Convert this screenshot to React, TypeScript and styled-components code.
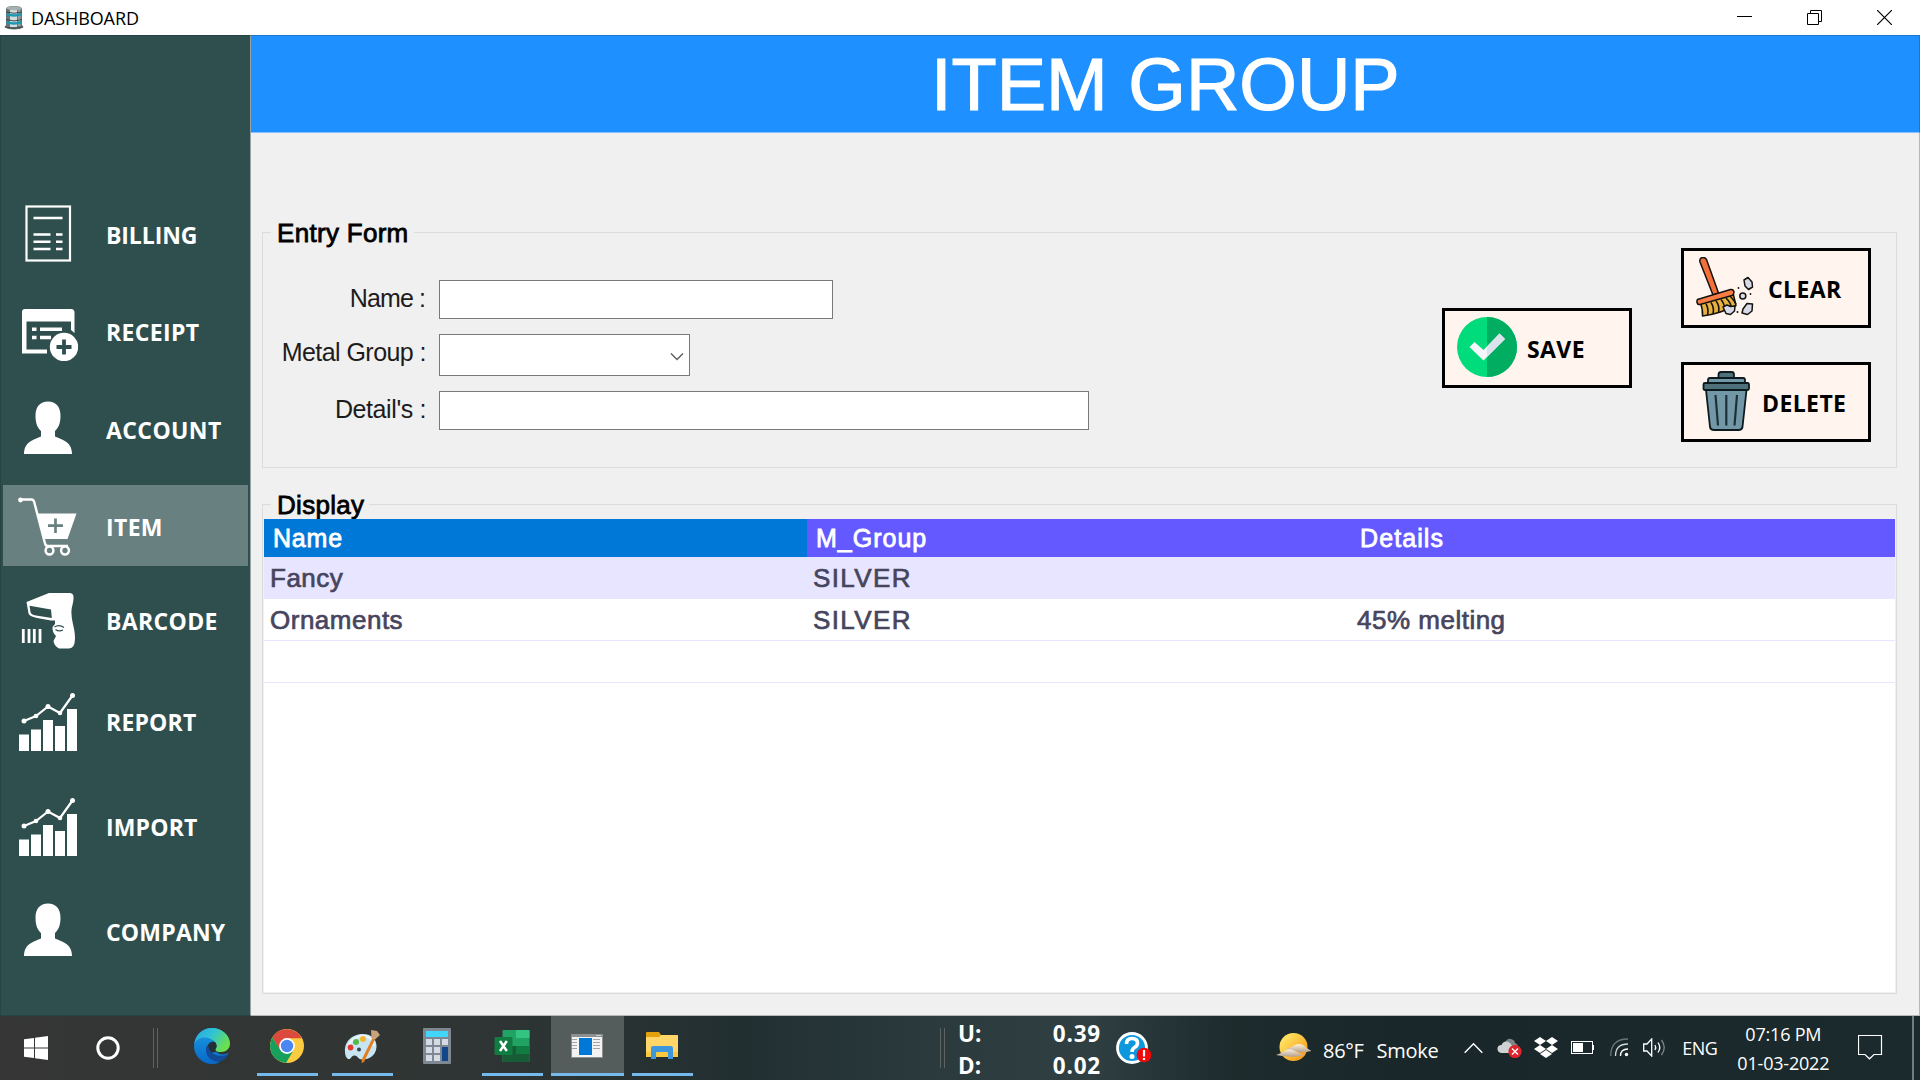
import React from "react";
import styled, { createGlobalStyle } from "styled-components";

const Global = createGlobalStyle`
  html, body { margin: 0; padding: 0; background: #fff; }
  *, *::before, *::after { box-sizing: border-box; }
  svg { display: block; flex: none; }
`;

const segoe = `"Open Sans", "Noto Sans", sans-serif`;
const msSans = `"Liberation Sans", Arial, sans-serif`;

const Screen = styled.div`
  width: 1920px;
  height: 1080px;
  display: grid;
  grid-template-rows: 35px 981px 64px;
  overflow: hidden;
  font-family: ${segoe};
`;

/* ---------- window chrome ---------- */

const TitleBar = styled.header`
  display: flex;
  align-items: center;
  background: #fff;
  padding-left: 4px;
`;
const WindowTitle = styled.span`
  flex: 1;
  margin-left: 7px;
  padding-top: 0;
  font-size: 18px;
  letter-spacing: -0.1px;
  color: #000;
`;
const Caption = styled.div`
  width: 70px;
  height: 34px;
  display: flex;
  align-items: center;
  justify-content: center;
`;
const Captions = styled.div`
  display: flex;
  padding-right: 1px;
`;

const Workspace = styled.div`
  display: grid;
  grid-template-columns: 251px 1fr;
  min-height: 0;
`;

/* ---------- sidebar ---------- */

const Sidebar = styled.nav`
  background: #2f4f4f;
  border-right: 1px solid #95a3a3;
  border-left: 1px solid #284343;
  border-top: 1px solid #284343;
  border-bottom: 1px solid #284343;
  display: flex;
  flex-direction: column;
  padding: 0 2px;
`;
const NavButton = styled.a<{ $gap: number; $active?: boolean }>`
  display: flex;
  align-items: center;
  flex: none;
  height: 81px;
  margin-top: ${(p) => p.$gap}px;
  padding-left: 15px;
  background: ${(p) => (p.$active ? "#698080" : "transparent")};
  color: #fff;
`;
const NavLabel = styled.span<{ $tracking: number }>`
  margin-left: 28px;
  padding-top: 3px;
  font-size: 23px;
  font-weight: 700;
  line-height: 30px;
  letter-spacing: ${(p) => p.$tracking}px;
  white-space: nowrap;
`;

/* ---------- main panel ---------- */

const Main = styled.main`
  background: #f0f0f0;
  border-right: 1px solid #b4b8b8;
  border-bottom: 1px solid #b4b8b8;
  display: flex;
  flex-direction: column;
  min-width: 0;
`;
const Banner = styled.div`
  height: 98px;
  flex: none;
  display: flex;
  align-items: center;
  margin-right: -1px;
  padding: 2px 0 0 680px;
  background: #1e90ff;
  border-top: 1px solid #1b78cf;
  border-right: 1px solid #1b78cf;
  border-bottom: 1px solid #84c0fb;
`;
const BannerTitle = styled.h1`
  margin: 0;
  font: 400 74px/80px ${msSans};
  color: #fff;
  white-space: nowrap;
  -webkit-text-stroke: 1.2px #fff;
`;
const Group = styled.fieldset<{ $top: number; $height: number }>`
  flex: none;
  margin: ${(p) => p.$top}px 22px 0 11px;
  padding: 0;
  min-width: 0;
  height: ${(p) => p.$height}px;
  border: 1px solid #dcdcdc;
`;
const GroupLegend = styled.legend`
  margin-left: 8px;
  padding: 1px 5px 0 6px;
  font: 400 26px/26px ${msSans};
  letter-spacing: 0.3px;
  color: #000;
  -webkit-text-stroke: 0.8px #000;
`;
const EntryBody = styled.div`
  display: flex;
  justify-content: space-between;
  padding-right: 25px;
`;
const Form = styled.div`
  padding-top: 34px;
`;
const FormRow = styled.div<{ $gap?: number }>`
  display: flex;
  align-items: center;
  margin-top: ${(p) => p.$gap ?? 0}px;
`;
const FormLabel = styled.label<{ $inset?: number; $lift?: number; $tracking?: number }>`
  width: 176px;
  padding-right: ${(p) => 13 + (p.$inset ?? 0)}px;
  padding-bottom: ${(p) => p.$lift ?? 4}px;
  text-align: right;
  font: 400 25px/30px ${msSans};
  letter-spacing: ${(p) => p.$tracking ?? -0.4}px;
  color: #1c1c1c;
  white-space: nowrap;
`;
const Field = styled.div<{ $w: number; $h: number }>`
  width: ${(p) => p.$w}px;
  height: ${(p) => p.$h}px;
  background: #fff;
  border: 1px solid #7a7a7a;
  display: flex;
  align-items: center;
  justify-content: flex-end;
  padding: 2px 5px 0 0;
`;
const Actions = styled.div`
  display: flex;
  gap: 49px;
`;
const ActionColumn = styled.div<{ $top: number }>`
  display: flex;
  flex-direction: column;
  gap: 34px;
  padding-top: ${(p) => p.$top}px;
`;
const ActionButton = styled.button`
  width: 190px;
  height: 80px;
  margin: 0;
  padding: 0 0 2px 12px;
  display: flex;
  align-items: center;
  background: #fff5ee;
  border: 3px solid #000;
  color: #000;
  font: 700 23px/30px ${segoe};
`;
const ActionText = styled.span<{ $gap: number }>`
  margin-left: ${(p) => p.$gap}px;
  padding-top: 3px;
  letter-spacing: 0.4px;
`;

/* ---------- grid ---------- */

const Grid = styled.div`
  margin: 1px 1px 0;
  height: 473px;
  background: #fff;
`;
const GridRow = styled.div<{ $kind?: "alt" | "plain" }>`
  display: grid;
  grid-template-columns: 543px 544px 1fr;
  height: 42px;
  background: ${(p) => (p.$kind === "alt" ? "#e7e5ff" : "#fff")};
  border-bottom: 1px solid #e7e5ff;
`;
const HeadRow = styled(GridRow)`
  height: 38px;
  background: #6458ff;
  border-bottom: 0;
`;
const Cell = styled.div<{ $tracking?: number }>`
  padding: 1px 0 0 6px;
  font: 400 26px/40px ${msSans};
  letter-spacing: ${(p) => p.$tracking ?? 0.5}px;
  color: #47455e;
  -webkit-text-stroke: 0.7px #47455e;
`;
const HeadCell = styled(Cell)<{ $selected?: boolean }>`
  padding: 1px 0 0 9px;
  line-height: 37px;
  font-size: 25px;
  color: #fff;
  background: ${(p) => (p.$selected ? "#0078d7" : "transparent")};
  -webkit-text-stroke: 0.8px #fff;
`;

/* ---------- taskbar ---------- */

const Taskbar = styled.footer`
  display: flex;
  height: 64px;
  color: #fff;
  background: linear-gradient(90deg, #353635 0, #2f3534 480px, #222f31 740px, #2a3a3d 930px, #2f3f42 1090px, #1d2b2d 1230px, #1a272a 1420px, #1b2a2d 1920px);
`;
const TaskItem = styled.div<{ $w: number; $gap?: number; $open?: boolean; $active?: boolean; $drop?: number; $left?: number }>`
  display: flex;
  align-items: center;
  justify-content: center;
  flex: none;
  width: ${(p) => p.$w}px;
  height: 60px;
  padding: ${(p) => p.$drop ?? 3}px ${(p) => p.$left ?? 2}px 0 0;
  margin-left: ${(p) => p.$gap ?? 0}px;
  background: ${(p) => (p.$active ? "#555d5c" : "transparent")};
  border-bottom: 3px solid ${(p) => (p.$open ? "#76b9ed" : "transparent")};
`;
const Grip = styled.div<{ $gap: number }>`
  flex: none;
  width: 5px;
  height: 40px;
  margin: 12px 0 0 ${(p) => p.$gap}px;
  border: solid #5f6463;
  border-width: 0 1px;
`;
const Meter = styled.div`
  display: grid;
  grid-template-columns: 60px 83px;
  grid-template-rows: 32px 31px;
  flex: none;
  margin-left: 13px;
  padding-top: 1px;
  font-weight: 700;
  font-size: 22.5px;
  line-height: 34px;
`;
const MeterValue = styled.span`
  text-align: right;
  letter-spacing: 0.8px;
`;
const TrayItem = styled.div<{ $gap: number; $w?: number }>`
  flex: none;
  display: flex;
  align-items: center;
  height: 63px;
  width: ${(p) => (p.$w ? `${p.$w}px` : "auto")};
  margin-left: ${(p) => p.$gap}px;
  white-space: nowrap;
`;
const Weather = styled(TrayItem)`
  font-size: 20px;
  padding-top: 6px;
  gap: 13px;
  letter-spacing: -0.3px;
`;
const Language = styled(TrayItem)`
  font-size: 18px;
  padding-top: 1px;
  letter-spacing: -0.6px;
`;
const Clock = styled.div`
  flex: none;
  width: 100px;
  margin-left: 15px;
  padding-top: 4px;
  text-align: center;
  font-size: 18px;
  line-height: 29px;
  letter-spacing: -0.2px;
`;
const ShowDesktop = styled.div`
  flex: none;
  margin-left: auto;
  width: 8px;
  border-left: 2px solid #737c7e;
`;

/* ---------- icons: sidebar ---------- */

const BillingIcon = () => (
  <svg width="60" height="60" viewBox="0 0 60 60" fill="none" stroke="#fff">
    <rect x="8.500" y="2.500" width="43.500" height="54" strokeWidth="2.200" />
    <path d="M15.500 14H44.500M15.500 30.500H32.500M38 30.500H44.500M15.500 37.800H32.500M38 37.800H44.500M15.500 45H32.500M38 45H44.500" strokeWidth="2.600" />
  </svg>
);
const ReceiptIcon = () => (
  <svg width="60" height="60" viewBox="0 0 60 60">
    <path d="M7 8H53Q56.500 8 56.500 11.500V32L53 29V20.500H8.500V48.500H29V52.500H4V11Q4 8 7 8Z" fill="#fff" />
    <path d="M14 28.300h4.500M22 28.300h22M14 36.500h4.500M22 36.500h11" stroke="#fff" strokeWidth="3.600" />
    <circle cx="46" cy="46" r="14.200" fill="#fff" />
    <path d="M46 38.500V53.500M38.500 46H53.500" stroke="#2f4f4f" strokeWidth="3.800" />
  </svg>
);
const PersonIcon = () => (
  <svg width="60" height="60" viewBox="0 0 60 60">
    <path d="M30 2.500C38 2.500 42.500 8 42.500 16.500C42.500 24.500 40.500 28.500 37 32V37.500C43 40.500 54 42 54 55H6C6 42 17 40.500 23 37.500V32C19.500 28.500 17.500 24.500 17.500 16.500C17.500 8 22 2.500 30 2.500Z" fill="#fff" />
  </svg>
);
const CartIcon = () => (
  <svg width="60" height="60" viewBox="0 0 60 60">
    <path d="M3 3.500H13.500Q15.500 3.500 16.200 6L27 47.500Q28 50.500 30 50H50" fill="none" stroke="#fff" strokeWidth="2.400" />
    <circle cx="2.500" cy="4" r="2.400" fill="#fff" />
    <path d="M19 17.500H58.500L49.500 43H26Z" fill="#fff" />
    <path d="M37.500 22.500V37M30 29.700H45" stroke="#698080" strokeWidth="2.700" />
    <g fill="#698080" stroke="#fff" strokeWidth="2.500">
      <circle cx="31.500" cy="54.500" r="3.900" />
      <circle cx="47" cy="54.500" r="3.900" />
    </g>
  </svg>
);
const ScannerIcon = () => (
  <svg width="60" height="60" viewBox="0 0 60 60">
    <path d="M8.500 12L31 3H52Q56 3.500 55.500 8C55.500 14 53 17 53.500 24C54 34 57 38 57 48Q57 58.500 51 58.500H41Q36 56 35.500 51Q37 48 38 46Q34 42 34.500 37L37 34L37 30.500L33 30.500L19 28Q11 26 10.500 23.500Z" fill="#fff" />
    <path d="M11.500 15.800L33 19.500L33.800 28L18 25.500Q13 24.500 12.500 22Z" fill="#2f4f4f" />
    <path d="M36.500 37Q41 34 46 37.500M37.500 39.500Q41 42 45 40" fill="none" stroke="#2f4f4f" strokeWidth="1.300" />
    <path d="M5.300 39V53M11 39V53M16.300 39V53M22 39V53" stroke="#fff" strokeWidth="2.800" />
  </svg>
);
const ChartIcon = () => (
  <svg width="60" height="60" viewBox="0 0 60 60">
    <path d="M1 43.500h10V60H1zM13 38.500h10V60H13zM25 29h10V60H25zM37 35h10V60H37zM49 18h10V60H49z" fill="#fff" />
    <path d="M6 30L18 25L30 15.500L42 22L54.500 4.500" fill="none" stroke="#fff" strokeWidth="2.200" />
    <g fill="#fff">
      <circle cx="6" cy="30" r="2.500" />
      <circle cx="18" cy="25" r="2.300" />
      <circle cx="30" cy="15.500" r="2.500" />
      <circle cx="42" cy="22" r="2.300" />
      <circle cx="54.500" cy="4.500" r="2.500" />
    </g>
  </svg>
);

/* ---------- icons: actions ---------- */

const SaveIcon = () => (
  <svg width="60" height="60" viewBox="0 0 60 60">
    <circle cx="30" cy="30" r="30" fill="#00dc7b" />
    <path d="M30 0A30 30 0 0 1 30 60Z" fill="#00ad61" />
    <path d="M12.500 30L17.500 25L26.500 33L42.500 16.500L48 22L26.500 43.500Z" fill="#f4f6fa" />
    <path d="M30 29.500L42.500 16.500L48 22L30 40Z" fill="#dae2ec" />
  </svg>
);
const BroomIcon = () => (
  <svg width="60" height="60" viewBox="0 0 60 60" stroke="#16120e" strokeWidth="1.500" strokeLinejoin="round">
    <path d="M4.500 46.500Q7 52 6.500 59Q23 57 40 48.500L37 36Z" fill="#e6b13f" />
    <path d="M10 47Q13 52 11.500 58M15 45.500Q18.500 51 17 56.500M20 44Q24 49 22.500 55M25 42.500Q29 47 28.500 53M30 41Q35 46 35 50M34 39Q38 43 40 47" fill="none" strokeWidth="1.600" />
    <path d="M5 1Q8.500 -0.500 10.500 2.500L22.500 36L17 38L4 5Q3.300 2.500 5 1Z" fill="#f4703a" />
    <path d="M1.500 42.500L34.500 32.500Q37.500 32 38 35Q38 37.500 36 38.500L4 47.500Q1.500 48 1 45.500Q0.700 43.500 1.500 42.500Z" fill="#fb7d45" />
    <g fill="#d9dbea">
      <path d="M27 50L31 48L34.500 49.500L39 49L38.500 54L34.500 57.500L30 56.500Z" />
      <path d="M47 52L51 46.500L56.500 47L56 54L51.500 57.500L46 56Z" />
      <path d="M48 23L52 20.500L56 25L56.500 30L52.500 32.500L49 29Z" />
      <circle cx="46.800" cy="39" r="3" />
    </g>
    <g fill="#16120e" stroke="none">
      <circle cx="42.500" cy="31" r="0.900" />
      <circle cx="54.500" cy="37" r="0.900" />
      <circle cx="41.500" cy="55" r="1" />
    </g>
  </svg>
);
const TrashIcon = () => (
  <svg width="60" height="60" viewBox="0 0 60 60" stroke="#0d1b20" strokeWidth="1.800" strokeLinejoin="round">
    <path d="M10 19H50.500L46.500 56Q46 59 42.500 59H18Q14.500 59 14 56Z" fill="#7298a8" />
    <path d="M22.500 7V3.500Q22.500 1 25 1H35.500Q38 1 38 3.500V7Z" fill="#4d7079" />
    <path d="M12 12V9Q12 7 14 7H47Q49 7 49 9V12Z" fill="#7298a8" />
    <path d="M9 12H51.500Q53 12 53 13.500V17.500Q53 19 51.500 19H9Q7.500 19 7.500 17.500V13.500Q7.500 12 9 12Z" fill="#4d7079" />
    <path d="M19.500 24L22 54.500M30.300 24V54.500M41 24L38.500 54.500" fill="none" strokeWidth="2.200" stroke="#1e3037" />
  </svg>
);

/* ---------- icons: taskbar ---------- */

const DatabaseIcon = () => (
  <svg width="20" height="25" viewBox="0 0 20 25">
    <path d="M2 4Q2 1 10 1Q18 1 18 4V20L19.500 22Q17 24.500 10 24.500Q3 24.500 0.500 22L2 20Z" fill="#6b7477" />
    <rect x="6" y="3" width="7" height="19" fill="#d5dcde" />
    <rect x="14" y="4" width="2.500" height="17" fill="#98a2a5" />
    <path d="M2.500 9Q10 12 17.500 9M2.500 17Q10 20 17.500 17" stroke="#1799b4" strokeWidth="2.400" fill="none" />
    <path d="M2 7Q10 9.500 18 7M2 14.500Q10 17.500 18 14.500M1 22Q10 24.500 19 22" stroke="#3e484b" strokeWidth="1" fill="none" />
    <ellipse cx="10" cy="3.200" rx="7.500" ry="2" fill="#a6afb1" />
  </svg>
);
const WindowsLogo = () => (
  <svg width="24" height="24" viewBox="0 0 24 24" fill="#fff">
    <path d="M0 3.300L10 2V11.400H0zM11 1.800L24 0V11.400H11zM0 12.500H10V22L0 20.700zM11 12.500H24V24L11 22.200z" />
  </svg>
);
const CortanaIcon = () => (
  <svg width="26" height="26" viewBox="0 0 26 26">
    <circle cx="13" cy="13" r="10.200" fill="none" stroke="#fff" strokeWidth="3" />
  </svg>
);
const EdgeIcon = () => (
  <svg width="36" height="36" viewBox="0 0 36 36">
    <defs>
      <linearGradient id="edgeTop" x1="0" y1="0" x2="1" y2="0.500">
        <stop offset="0" stopColor="#2aa5e0" />
        <stop offset="0.500" stopColor="#2fc3d6" />
        <stop offset="1" stopColor="#6be04f" />
      </linearGradient>
      <linearGradient id="edgeLeft" x1="0" y1="0" x2="0" y2="1">
        <stop offset="0" stopColor="#1b9de2" />
        <stop offset="1" stopColor="#0868c8" />
      </linearGradient>
    </defs>
    <circle cx="18" cy="18" r="18" fill="url(#edgeLeft)" />
    <path d="M26 33Q32 30 34.500 26L36 24V36H24Z" fill="#303534" />
    <path d="M21 23.500Q29 29 36 24V16L20 18Z" fill="#303534" />
    <path d="M0.300 16C2 6 9 0 18 0C28 0 36 7.500 36 15.500C36 21 32 24 27 24C22 24 20.500 22.500 21.500 21C24 18 22 13 17 11C10 8 3 10 0.300 16Z" fill="url(#edgeTop)" />
    <path d="M21.500 21Q24 17.500 21 14Q17 13 14.500 16Q12.500 20 16 25L22.500 23.700Q20.500 22.700 21.500 21Z" fill="#242f35" />
    <path d="M13 17C9.500 25 15 33 24 34Q30 33 34 27.500Q34.500 26 32.500 26.700C25 30 16 26 14.500 19Z" fill="#114a97" />
  </svg>
);
const ChromeIcon = () => (
  <svg width="34" height="34" viewBox="0 0 34 34">
    <circle cx="17" cy="17" r="17" fill="#fccb3f" />
    <path d="M17 17L17 9.300H31.900A17 17 0 0 0 2.300 8.500L10 21Z" fill="#db4a3c" />
    <path d="M2.300 8.500A17 17 0 0 0 16 34L23.500 21.500L17 17L10.400 21Z" fill="#17a05c" />
    <circle cx="17" cy="17" r="7.900" fill="#fff" />
    <circle cx="17" cy="17" r="6.200" fill="#4b87f3" />
  </svg>
);
const PaintIcon = () => (
  <svg width="36" height="36" viewBox="0 0 36 36">
    <path d="M1 24C0 13 9 6 19 6C28 6 33 12 32.500 19C32 28 24 32 18 31.500C13 31 14 27 10 27.500C7 28 7 32 4 31Q1 29 1 24Z" fill="#c8e5f3" />
    <path d="M4 22C4 14 11 8 19 8C26 8 30 13 30 18" fill="none" stroke="#eef8fc" strokeWidth="2" />
    <circle cx="6.500" cy="19.500" r="2.900" fill="#e23b32" />
    <circle cx="12" cy="14" r="3" fill="#57b947" />
    <circle cx="19" cy="11" r="3" fill="#f7b52c" />
    <circle cx="15" cy="21.500" r="2" fill="#35424a" />
    <path d="M28.500 10L31 11.500L20 34L17.500 35L18 31Z" fill="#e57f1d" />
    <path d="M27 2L33 3L36 7L31 11.500L27.500 10Z" fill="#c9a27c" />
  </svg>
);
const CalculatorIcon = () => (
  <svg width="28" height="36" viewBox="0 0 28 36">
    <rect width="28" height="36" rx="1" fill="#7e8893" />
    <rect x="3" y="3" width="22" height="6" fill="#42d6fb" />
    <path d="M3 11h6v6H3zM11 11h6v6h-6zM19 11h6v6h-6zM3 19h6v6H3zM11 19h6v6h-6zM3 27h6v6H3zM11 27h6v6h-6z" fill="#d5dae4" />
    <rect x="19" y="19" width="6" height="14" fill="#12478a" />
  </svg>
);
const ExcelIcon = () => (
  <svg width="36" height="34" viewBox="0 0 36 34">
    <rect x="8.500" y="1" width="27" height="32" rx="1" fill="#21a366" />
    <path d="M22 1h12.500q1 0 1 1v7H22z" fill="#33c481" />
    <path d="M8.500 17H22v8H8.500z" fill="#185c37" />
    <path d="M22 17h13.500v8H22z" fill="#107c41" />
    <path d="M8.500 25h27v7q0 1-1 1h-25q-1 0-1-1z" fill="#185c37" />
    <rect x="0.500" y="8" width="18" height="18" rx="1" fill="#107c41" />
    <path d="M6 12L12.800 22M12.800 12L6 22" stroke="#fff" strokeWidth="2.500" />
  </svg>
);
const FormAppIcon = () => (
  <svg width="32" height="24" viewBox="0 0 32 24">
    <rect width="32" height="24" fill="#8d9090" />
    <rect x="1" y="3" width="30" height="20" fill="#f3f3f3" />
    <rect x="8" y="4" width="13" height="17" fill="#0078d7" />
    <path d="M1 5.500h5M1 8.500h5M1 11.500h5M1 14.500h5M22 5.500h7M22 8.500h7M22 11.500h7M22 14.500h7" stroke="#a5a5a5" />
    <path d="M25 1.500h5" stroke="#c8c8c8" />
  </svg>
);
const ExplorerIcon = () => (
  <svg width="32" height="28" viewBox="0 0 32 28">
    <path d="M0 1q0-1 1-1h12l2 3h16q1 0 1 1v6H0z" fill="#e2a10d" />
    <path d="M0 5h13l2-2h16q1 0 1 1v21H0z" fill="#ffd667" />
    <path d="M0 20h32v5H0z" fill="#fbc93d" />
    <path d="M5 27V16q0-2 2-2h18q2 0 2 2v11h-5v-6q0-1-1-1H11q-1 0-1 1v6z" fill="#3d97dc" />
  </svg>
);
const HelpIcon = () => (
  <svg width="38" height="36" viewBox="0 0 38 36">
    <circle cx="17" cy="18" r="14.500" fill="#0d97dd" stroke="#fff" strokeWidth="2.800" />
    <path d="M11.500 14Q11.500 8.500 17 8.500Q22.500 8.500 22.500 13Q22.500 16 19.500 17.500Q17 19 17 22" fill="none" stroke="#fff" strokeWidth="3.600" />
    <circle cx="17" cy="26.500" r="2.500" fill="#fff" />
    <circle cx="29" cy="25" r="7.300" fill="#f20a0a" />
    <path d="M29 20V26.500M29 28V30" stroke="#fff" strokeWidth="2.200" />
  </svg>
);
const SunIcon = () => (
  <svg width="36" height="32" viewBox="0 0 36 32">
    <defs>
      <linearGradient id="sun" x1="0" y1="0" x2="1" y2="1">
        <stop offset="0.200" stopColor="#ffe05d" />
        <stop offset="1" stopColor="#f78f0c" />
      </linearGradient>
      <linearGradient id="haze" x1="0" y1="0" x2="0" y2="1">
        <stop offset="0" stopColor="#fff1d8" />
        <stop offset="1" stopColor="#b3a08f" />
      </linearGradient>
    </defs>
    <circle cx="17.500" cy="15" r="14" fill="url(#sun)" />
    <path d="M10 17Q16 15 19 13Q23 11 27 13Q30 16 35.500 19Q30 20 25 20.500Q15 19 10 17Z" fill="url(#haze)" />
    <path d="M0 23Q6 21 10 18Q15 16 19 19Q23 22 29 23.500Q20 25 12 24.500Q5 24 0 23Z" fill="url(#haze)" />
  </svg>
);
const Chevron = () => (
  <svg width="19" height="12" viewBox="0 0 19 12" fill="none" stroke="#fff" strokeWidth="1.400">
    <path d="M0.700 10.700L9.500 1.700L18.300 10.700" />
  </svg>
);
const CloudIcon = () => (
  <svg width="25" height="22" viewBox="0 0 25 22">
    <path d="M8 6Q10 1 14 2Q18 3 18 6Q21 7 21 10H8Z" fill="#7d8586" />
    <path d="M4 16Q0 15 0.500 11Q1 8 4.500 8Q6 4 10 4.500Q14 5.500 15 9L17 16Z" fill="#d0d3d3" />
    <circle cx="18" cy="14.500" r="6.600" fill="#e0242c" />
    <path d="M15 11.500L21 17.500M21 11.500L15 17.500" stroke="#fff" strokeWidth="1.400" />
  </svg>
);
const DropboxIcon = () => (
  <svg width="24" height="22" viewBox="0 0 24 22" fill="#fff">
    <path d="M6 0L12 4L6 8L0 4zM18 0L24 4L18 8L12 4zM6 8L12 12L6 16L0 12zM18 8L24 12L18 16L12 12zM12 13L18 17L12 21L6 17z" />
  </svg>
);
const BatteryIcon = () => (
  <svg width="23" height="13" viewBox="0 0 23 13">
    <rect x="0.500" y="0.500" width="21" height="12" fill="none" stroke="#fff" />
    <rect x="2" y="2" width="10" height="9" fill="#fff" />
    <rect x="22" y="4" width="1" height="5" fill="#fff" />
  </svg>
);
const WifiIcon = () => (
  <svg width="19" height="19" viewBox="0 0 19 19" fill="none" strokeWidth="1.300">
    <path d="M0.700 18Q0.700 1 18 1" stroke="#67767a" />
    <path d="M5.500 18Q5.500 6 18 6" stroke="#d5dadb" />
    <path d="M10.500 18Q10.500 11 18 11" stroke="#fff" />
    <circle cx="16.500" cy="16.500" r="1.700" fill="#fff" />
  </svg>
);
const VolumeIcon = () => (
  <svg width="23" height="19" viewBox="0 0 23 19" fill="none" stroke="#fff" strokeWidth="1.300">
    <path d="M0.700 6H4L8.700 1V18L4 13H0.700Z" />
    <path d="M12 7Q13.500 9.500 12 12M15 4.500Q18.500 9.500 15 14.500" />
    <path d="M18.500 2Q24 9.500 18.500 17" stroke="#7b8789" />
  </svg>
);
const NotificationIcon = () => (
  <svg width="25" height="25" viewBox="0 0 25 25" fill="none" stroke="#fff" strokeWidth="1.200">
    <path d="M0.500 0.500H23.500V19.500H16L11.500 23.800L7 19.500H0.500Z" />
  </svg>
);

const navItems = [
  { label: "BILLING", gap: 157, tracking: -0.1, Icon: BillingIcon },
  { label: "RECEIPT", gap: 16, tracking: 0.35, Icon: ReceiptIcon },
  { label: "ACCOUNT", gap: 17, tracking: 0.4, Icon: PersonIcon },
  { label: "ITEM", gap: 16, tracking: 0.35, Icon: CartIcon, active: true },
  { label: "BARCODE", gap: 13, tracking: 0.35, Icon: ScannerIcon },
  { label: "REPORT", gap: 20, tracking: 0.2, Icon: ChartIcon },
  { label: "IMPORT", gap: 24, tracking: 0.15, Icon: ChartIcon },
  { label: "COMPANY", gap: 24, tracking: 0.2, Icon: PersonIcon },
];

const rows = [
  ["Fancy", "SILVER", ""],
  ["Ornaments", "SILVER", "45% melting"],
  ["", "", ""],
];
const columnTracking = [0.5, 1.4, 0.5];

export default function App() {
  return (
    <Screen>
      <Global />
      <TitleBar>
        <DatabaseIcon />
        <WindowTitle>DASHBOARD</WindowTitle>
        <Captions>
          <Caption>
            <svg width="15" height="15" viewBox="0 0 15 15" stroke="#000"><path d="M0 6.500H15" /></svg>
          </Caption>
          <Caption>
            <svg width="15" height="15" viewBox="0 0 15 15" stroke="#000" fill="none"><path d="M0.500 3.500h11v11h-11zM3.500 3.500v-3h11v11h-3" /></svg>
          </Caption>
          <Caption>
            <svg width="15" height="15" viewBox="0 0 15 15" stroke="#000" strokeWidth="1.200"><path d="M0 0L15 15M15 0L0 15" /></svg>
          </Caption>
        </Captions>
      </TitleBar>

      <Workspace>
        <Sidebar>
          {navItems.map(({ label, gap, tracking, Icon, active }) => (
            <NavButton key={label} $gap={gap} $active={active}>
              <Icon />
              <NavLabel $tracking={tracking}>{label}</NavLabel>
            </NavButton>
          ))}
        </Sidebar>

        <Main>
          <Banner>
            <BannerTitle>ITEM GROUP</BannerTitle>
          </Banner>

          <Group $top={86} $height={249}>
            <GroupLegend>Entry Form</GroupLegend>
            <EntryBody>
              <Form>
                <FormRow>
                  <FormLabel $inset={1} $tracking={-0.9}>Name :</FormLabel>
                  <Field $w={394} $h={39} />
                </FormRow>
                <FormRow $gap={15}>
                  <FormLabel $lift={6} $tracking={-0.55}>Metal Group :</FormLabel>
                  <Field $w={251} $h={42}>
                    <svg width="14" height="9" viewBox="0 0 14 9" fill="none" stroke="#606060" strokeWidth="1.500"><path d="M1 1.500L7 7.500L13 1.500" /></svg>
                  </Field>
                </FormRow>
                <FormRow $gap={15}>
                  <FormLabel>Detail's :</FormLabel>
                  <Field $w={650} $h={39} />
                </FormRow>
              </Form>
              <Actions>
                <ActionColumn $top={62}>
                  <ActionButton><SaveIcon /><ActionText $gap={10}>SAVE</ActionText></ActionButton>
                </ActionColumn>
                <ActionColumn $top={2}>
                  <ActionButton><BroomIcon /><ActionText $gap={12}>CLEAR</ActionText></ActionButton>
                  <ActionButton><TrashIcon /><ActionText $gap={6}>DELETE</ActionText></ActionButton>
                </ActionColumn>
              </Actions>
            </EntryBody>
          </Group>

          <Group $top={23} $height={503}>
            <GroupLegend>Display</GroupLegend>
            <Grid>
              <HeadRow>
                <HeadCell $selected $tracking={0.8}>Name</HeadCell>
                <HeadCell $tracking={1}>M_Group</HeadCell>
                <HeadCell $tracking={1.1}>Details</HeadCell>
              </HeadRow>
              {rows.map((row, i) => (
                <GridRow key={i} $kind={i === 0 ? "alt" : "plain"}>
                  {row.map((value, j) => <Cell key={j} $tracking={columnTracking[j]}>{value}</Cell>)}
                </GridRow>
              ))}
            </Grid>
          </Group>
        </Main>
      </Workspace>

      <Taskbar>
        <TaskItem $w={72} $drop={7} $left={0}><WindowsLogo /></TaskItem>
        <TaskItem $w={72} $drop={7} $left={0}><CortanaIcon /></TaskItem>
        <Grip $gap={9} />
        <TaskItem $w={73} $gap={18}><EdgeIcon /></TaskItem>
        <TaskItem $w={61} $gap={8} $open><ChromeIcon /></TaskItem>
        <TaskItem $w={61} $gap={14} $open><PaintIcon /></TaskItem>
        <TaskItem $w={61} $gap={13} $left={0}><CalculatorIcon /></TaskItem>
        <TaskItem $w={61} $gap={15} $open><ExcelIcon /></TaskItem>
        <TaskItem $w={73} $gap={8} $open $active><FormAppIcon /></TaskItem>
        <TaskItem $w={61} $gap={8} $open><ExplorerIcon /></TaskItem>
        <Grip $gap={247} />
        <Meter>
          <span>U:</span><MeterValue>0.39</MeterValue>
          <span>D:</span><MeterValue>0.02</MeterValue>
        </Meter>
        <TrayItem $gap={14}><HelpIcon /></TrayItem>
        <TrayItem $gap={123}><SunIcon /></TrayItem>
        <Weather $gap={11}><span>86°F</span><span>Smoke</span></Weather>
        <TrayItem $gap={26}><Chevron /></TrayItem>
        <TrayItem $gap={14}><CloudIcon /></TrayItem>
        <TrayItem $gap={12}><DropboxIcon /></TrayItem>
        <TrayItem $gap={13}><BatteryIcon /></TrayItem>
        <TrayItem $gap={16}><WifiIcon /></TrayItem>
        <TrayItem $gap={14}><VolumeIcon /></TrayItem>
        <Language $gap={16} $w={36}>ENG</Language>
        <Clock>07:16 PM<br />01-03-2022</Clock>
        <TrayItem $gap={25}><NotificationIcon /></TrayItem>
        <ShowDesktop />
      </Taskbar>
    </Screen>
  );
}
